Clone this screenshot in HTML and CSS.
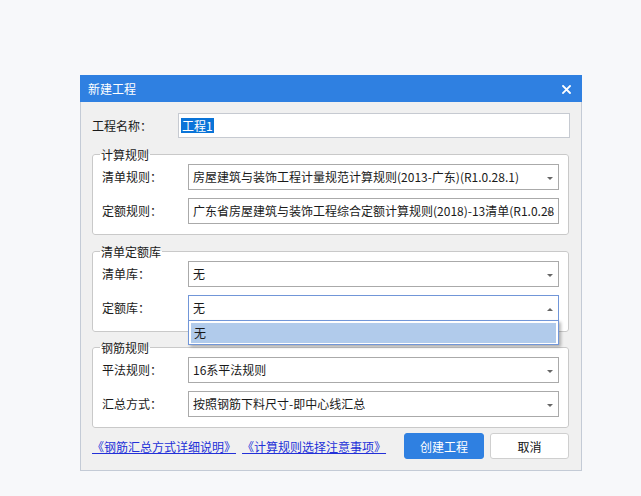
FILE: index.html
```html
<!DOCTYPE html>
<html lang="zh-CN">
<head>
<meta charset="utf-8">
<title>新建工程</title>
<link rel="stylesheet" href="styles.css">
</head>
<body>
<div class="dialog">
  <div class="titlebar">
    <span class="title">新建工程</span>
    <svg class="close" width="9" height="9" viewBox="0 0 9 9"><path d="M1 1L8 8M8 1L1 8" stroke="#fff" stroke-width="1.8" stroke-linecap="square"/></svg>
  </div>
  <div class="body">
    <div class="row name-row">
      <label class="lbl">工程名称：</label>
      <div class="input"><span class="selected-text">工程1</span></div>
    </div>

    <fieldset class="group">
      <legend>计算规则</legend>
      <div class="row">
        <label class="lbl">清单规则：</label>
        <div class="select"><span class="val">房屋建筑与装饰工程计量规范计算规则(2013-广东)(R1.0.28.1)</span><svg class="arrow" width="6" height="3" viewBox="0 0 6 3"><path d="M0 0H6L3 3Z" fill="#666"/></svg></div>
      </div>
      <div class="row">
        <label class="lbl">定额规则：</label>
        <div class="select"><span class="val">广东省房屋建筑与装饰工程综合定额计算规则(2018)-13清单(R1.0.28.1)</span><svg class="arrow" width="6" height="3" viewBox="0 0 6 3"><path d="M0 0H6L3 3Z" fill="#666"/></svg></div>
      </div>
    </fieldset>

    <fieldset class="group">
      <legend>清单定额库</legend>
      <div class="row">
        <label class="lbl">清单库：</label>
        <div class="select"><span class="val">无</span><svg class="arrow" width="6" height="3" viewBox="0 0 6 3"><path d="M0 0H6L3 3Z" fill="#666"/></svg></div>
      </div>
      <div class="row">
        <label class="lbl">定额库：</label>
        <div class="select active"><span class="val">无</span><svg class="arrow" width="6" height="3" viewBox="0 0 6 3"><path d="M0 3H6L3 0Z" fill="#666"/></svg>
          <ul class="dropdown"><li class="item hl">无</li></ul>
        </div>
      </div>
    </fieldset>

    <fieldset class="group">
      <legend>钢筋规则</legend>
      <div class="row">
        <label class="lbl">平法规则：</label>
        <div class="select"><span class="val">16系平法规则</span><svg class="arrow" width="6" height="3" viewBox="0 0 6 3"><path d="M0 0H6L3 3Z" fill="#666"/></svg></div>
      </div>
      <div class="row">
        <label class="lbl">汇总方式：</label>
        <div class="select"><span class="val">按照钢筋下料尺寸-即中心线汇总</span><svg class="arrow" width="6" height="3" viewBox="0 0 6 3"><path d="M0 0H6L3 3Z" fill="#666"/></svg></div>
      </div>
    </fieldset>

    <div class="footer">
      <div class="links">
        <a href="#" class="link">《钢筋汇总方式详细说明》</a>
        <a href="#" class="link">《计算规则选择注意事项》</a>
      </div>
      <div class="buttons">
        <button class="btn primary">创建工程</button>
        <button class="btn">取消</button>
      </div>
    </div>
  </div>
</div>
</body>
</html>
```

FILE: styles.css
```css
html, body {
  margin: 0;
  padding: 0;
}
body {
  background: #f7f8fa;
  font-family: "Noto Sans CJK SC", "Noto Sans", sans-serif;
  font-size: 12px;
  color: #1a1a1a;
  width: 641px;
  height: 496px;
  overflow: hidden;
}
.dialog {
  margin: 75px 0 0 80px;
  width: 500px;
  border: 1px solid #c4cbd6;
  border-top: none;
  background: #f0f0f0;
}
.titlebar {
  height: 27px;
  margin: 0 -1px;
  background: #2f80e1;
  display: flex;
  align-items: center;
  justify-content: space-between;
  padding: 0 11px 0 8px;
  color: #fff;
}
.title {
  font-size: 12px;
  line-height: 16px;
}
.close {
  display: block;
  margin-top: 1px;
}
.body {
  padding: 11px;
}
.row {
  display: flex;
  align-items: center;
}
.lbl {
  width: 86px;
  flex: none;
  line-height: 16px;
  color: #1a1a1a;
}
.input {
  flex: 1;
  height: 23px;
  border: 1px solid #c6cad1;
  background: #fff;
  display: flex;
  align-items: center;
  padding-left: 2px;
}
.selected-text {
  background: #0a74d8;
  color: #fff;
  line-height: 15px;
  padding: 0 1px;
}
.group {
  margin: 8px 1px 0 0;
  padding: 1px 9px 10px 9px;
  border: 1px solid #c9c9c9;
  border-radius: 3px;
  background: #fff;
  min-width: 0;
  display: flex;
  flex-direction: column;
  gap: 8px;
}
.group:last-of-type {
  margin-top: 7px;
}
legend {
  padding: 0 1px;
  margin-left: -2px;
  line-height: 17px;
  font-size: 12px;
  color: #1a1a1a;
}
.select {
  position: relative;
  flex: 1;
  min-width: 0;
  height: 24px;
  border: 1px solid #aaaaaa;
  background: #fff;
  display: flex;
  align-items: center;
  padding-left: 4px;
  padding-right: 4px;
}
.select.active {
  border-color: #7196d8;
}
.val {
  flex: 1;
  min-width: 0;
  overflow: hidden;
  white-space: nowrap;
  line-height: 16px;
  color: #1a1a1a;
}
.arrow {
  position: absolute;
  right: 5px;
  top: 12px;
  display: block;
}
.dropdown {
  position: absolute;
  left: -1px;
  right: -1px;
  top: 100%;
  margin: 0;
  padding: 1px;
  list-style: none;
  background: #fff;
  border: 1px solid #7196d8;
  box-shadow: 2px 2px 3px rgba(0, 0, 0, 0.28);
  z-index: 5;
}
.item {
  height: 20px;
  line-height: 20px;
  padding-left: 3px;
  margin: 1px 1px 0;
}
.item.hl {
  background: #b1cbeb;
}
.footer {
  margin-top: 5px;
  margin-right: 1px;
  display: flex;
  align-items: center;
  justify-content: space-between;
}
.links {
  display: flex;
  gap: 6px;
  padding-top: 1px;
}
.link {
  color: #2330d8;
  text-decoration: underline;
  line-height: 16px;
}
.buttons {
  display: flex;
  gap: 6px;
}
.btn {
  font-family: "Noto Sans CJK SC", "Noto Sans", sans-serif;
  font-size: 12px;
  height: 26px;
  width: 79px;
  border: 1px solid #cfcfcf;
  border-radius: 3px;
  background: #fff;
  color: #111;
  padding: 0;
}
.btn.primary {
  width: 80px;
  background: #2f80e1;
  border-color: #2f80e1;
  color: #fff;
}
```
